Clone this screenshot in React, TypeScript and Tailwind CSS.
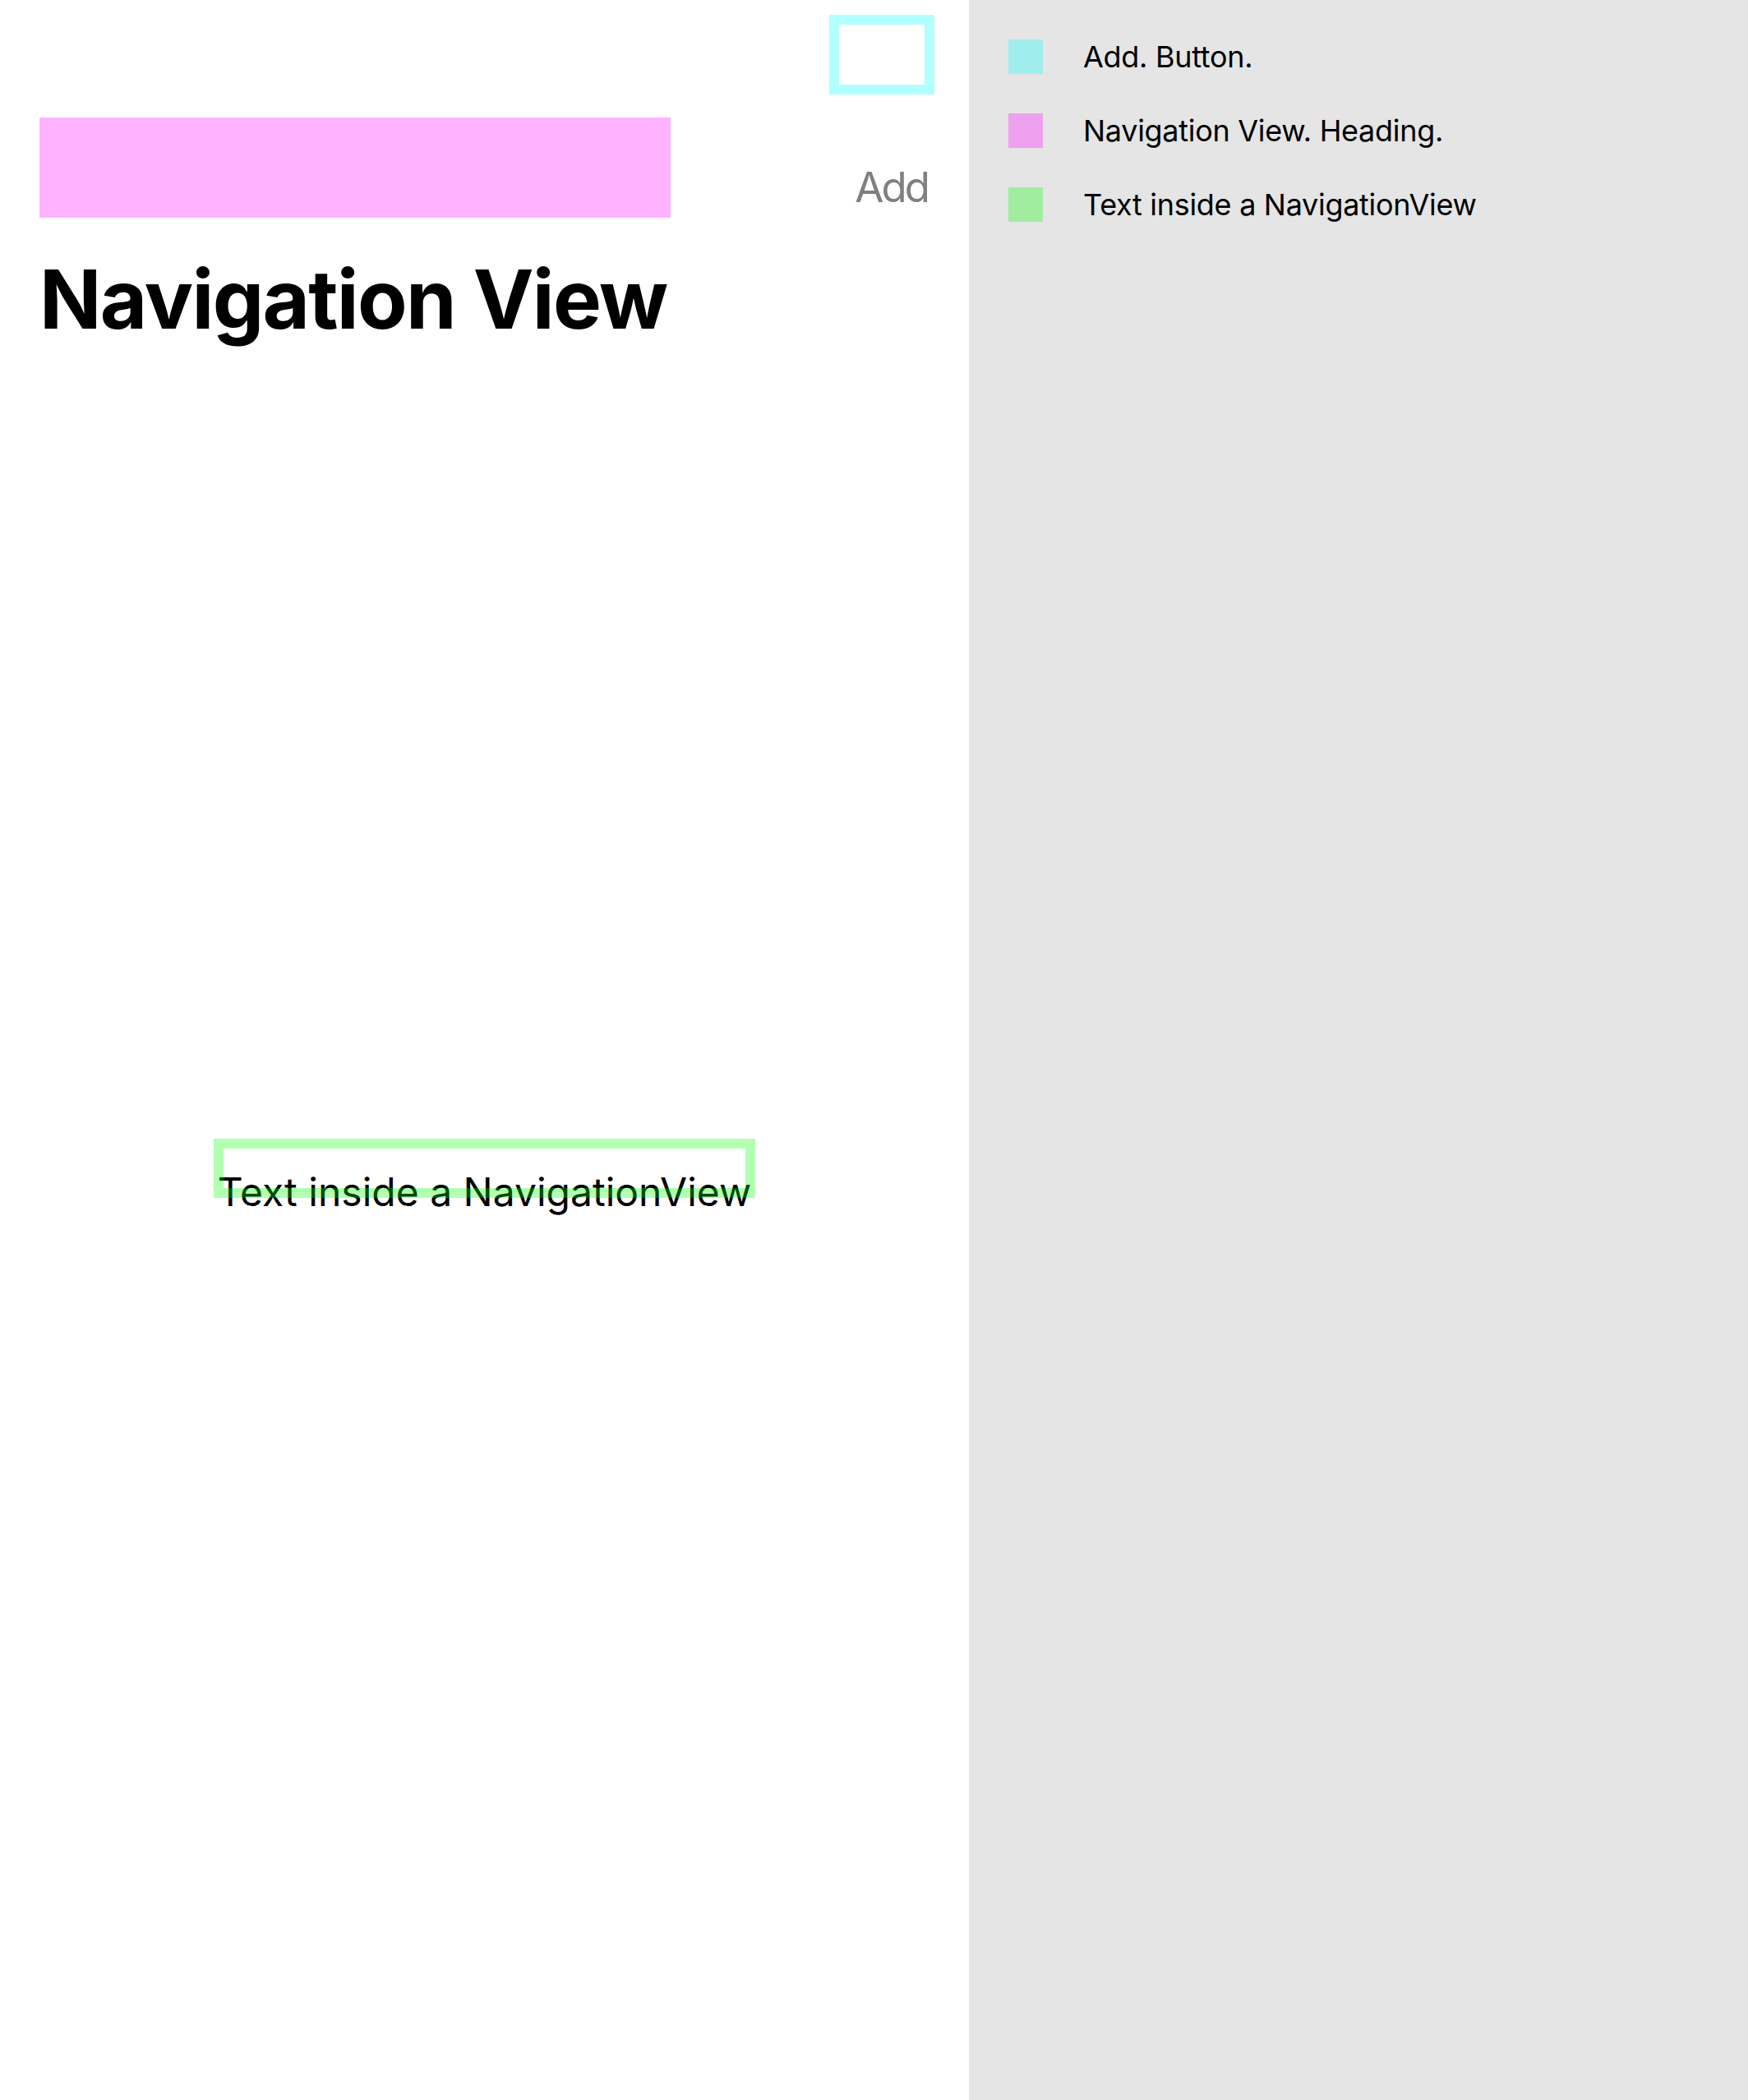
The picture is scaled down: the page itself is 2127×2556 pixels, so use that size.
import React from "react";

export default function App() {
  const font = { fontFamily: "Inter, 'Noto Sans', sans-serif" };
  return (
    <div className="flex w-[2127px] h-[2556px]" style={font}>
      <div className="relative w-[1179px] h-[2556px] bg-white flex flex-col">
        <div className="flex justify-end pt-[202px] pr-[50px]">
          <span className="text-[51px] leading-none text-[#808080] tracking-[-3px]">Add</span>
        </div>
        <div className="mt-[62px] pl-[48px]">
          <h1 className="text-[99px] leading-none font-bold text-black tracking-[-1.7px]">Navigation View</h1>
        </div>
        <div className="mt-[1013px] flex justify-center">
          <span className="text-[48px] leading-none text-black">Text inside a NavigationView</span>
        </div>

        <div className="absolute left-[1009px] top-[18px] w-[128px] h-[97px] border-[12px] border-[rgba(0,255,255,0.3)]" />
        <div className="absolute left-[48px] top-[143px] w-[768px] h-[122px] bg-[rgba(255,0,255,0.3)]" />
        <div className="absolute left-[260px] top-[1386px] w-[659px] h-[72px] border-[12px] border-[rgba(0,255,0,0.3)]" />
      </div>
      <div className="flex-1 h-[2556px] bg-[#e5e5e5] pl-[48px] pt-[48px] flex flex-col gap-[48px]">
        <div className="flex items-center gap-[49px]">
          <div className="w-[42px] h-[42px] bg-[rgba(0,255,255,0.3)]" />
          <span className="text-[36px] leading-none text-black tracking-[-0.3px]">Add. Button.</span>
        </div>
        <div className="flex items-center gap-[49px]">
          <div className="w-[42px] h-[42px] bg-[rgba(255,0,255,0.3)]" />
          <span className="text-[36px] leading-none text-black tracking-[-0.3px]">Navigation View. Heading.</span>
        </div>
        <div className="flex items-center gap-[49px]">
          <div className="w-[42px] h-[42px] bg-[rgba(0,255,0,0.3)]" />
          <span className="text-[36px] leading-none text-black tracking-[-0.3px]">Text inside a NavigationView</span>
        </div>
      </div>
    </div>
  );
}
